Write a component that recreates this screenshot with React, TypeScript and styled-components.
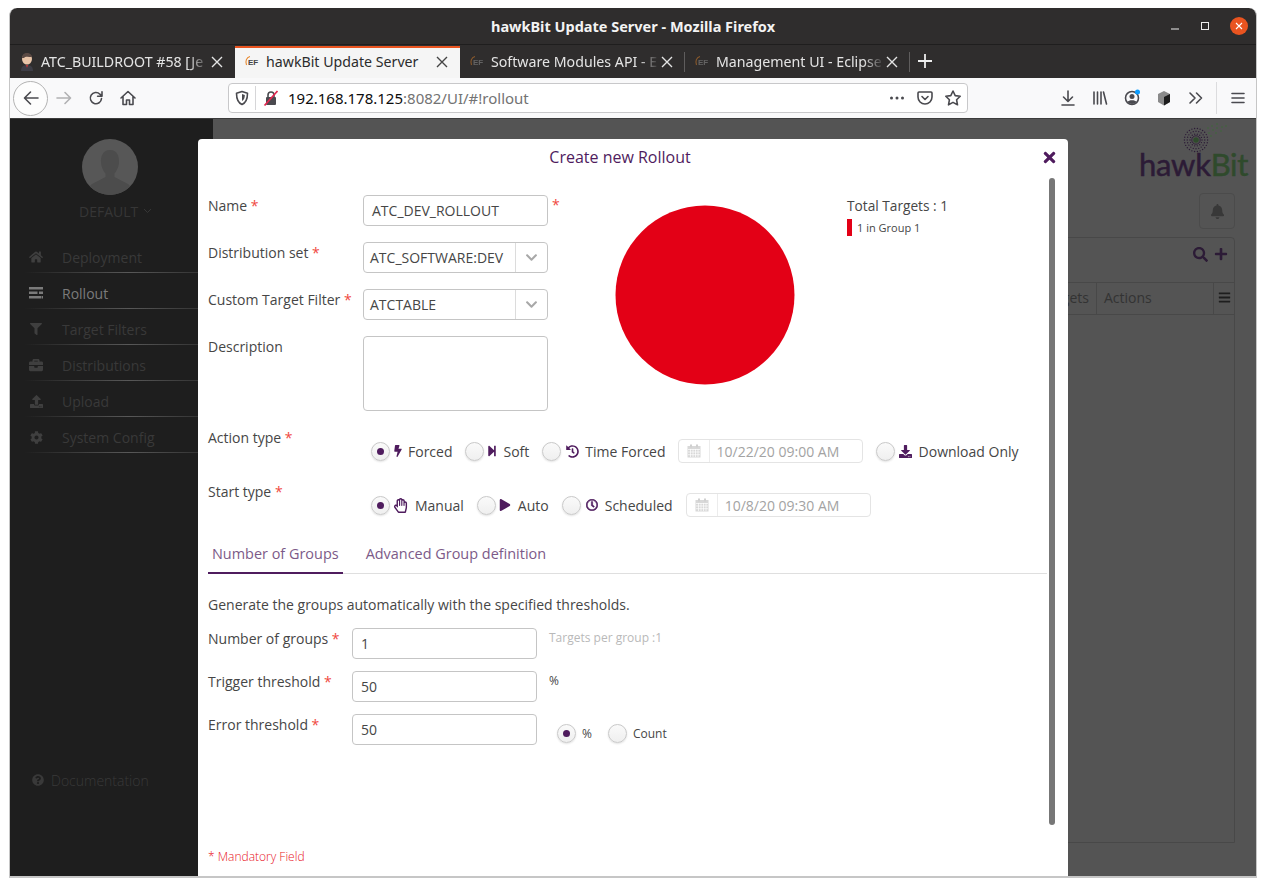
import React from "react";
import styled, { createGlobalStyle } from "styled-components";
import {
  FaBolt, FaStepForward, FaHistory, FaDownload, FaRegHandPaper, FaPlay, FaRegClock,
  FaHome, FaFilter, FaBriefcase, FaUpload, FaCog, FaQuestionCircle, FaTimes, FaSearch,
  FaPlus, FaBars, FaBell, FaChevronDown,
} from "react-icons/fa";

const Global = createGlobalStyle`
  html, body { margin: 0; padding: 0; background: #fff; overflow: hidden; }
  * { box-sizing: border-box; }
`;

const UI = `"Noto Sans", "Open Sans", sans-serif`;
const PAGE = `"Open Sans", "Noto Sans", sans-serif`;
const PURPLE = "#4f1c5e";

const Window = styled.div`
  position: relative;
  width: 1248px;
  height: 870px;
  margin: 8px 0 0 9px;
  display: flex;
  flex-direction: column;
  border: solid #c6c6c6;
  border-width: 0 1px 2px 1px;
  border-radius: 8px 8px 0 0;
  overflow: hidden;
  background: #2f2d2d;
`;
const TitleBar = styled.div`
  height: 37px;
  flex: none;
  position: relative;
  display: flex;
  align-items: center;
  justify-content: center;
  padding: 0 0 1px 0;
  border-bottom: 1px solid #1f1e1e;
  color: #f3f3f3;
  font: 700 14.5px ${UI};
`;
const WinControls = styled.div`
  position: absolute;
  right: 8px;
  top: 9px;
  display: flex;
  align-items: center;
  gap: 20px;
`;
const CloseDot = styled.div`
  width: 18px;
  height: 18px;
  border-radius: 50%;
  background: #e95420;
  display: flex;
  align-items: center;
  justify-content: center;
`;
const TabStrip = styled.div`
  height: 33px;
  flex: none;
  display: flex;
  align-items: stretch;
`;
const Tab = styled.div<{ $active?: boolean; $sep?: boolean }>`
  width: 225px;
  flex: none;
  display: flex;
  align-items: center;
  margin-top: 1px;
  padding: 0 10px 3px 9px;
  background: ${(p) => (p.$active ? "#f5f5f5" : "transparent")};
  color: ${(p) => (p.$active ? "#2c2c2c" : "#e4e4e4")};
  border-top: 2px solid ${(p) => (p.$active ? "#e95420" : "transparent")};
  position: relative;
  font: 400 14.2px ${UI};
  &::after {
    content: "";
    display: ${(p) => (p.$sep ? "block" : "none")};
    position: absolute;
    right: 0;
    top: 4px;
    bottom: 6px;
    width: 1px;
    background: #5f5d5d;
  }
`;
const TabTitle = styled.span`
  flex: 1;
  min-width: 0;
  margin-left: 6px;
  white-space: nowrap;
  overflow: hidden;
  -webkit-mask-image: linear-gradient(to right, #000 88%, transparent 100%);
  mask-image: linear-gradient(to right, #000 88%, transparent 100%);
`;
const PlainTitle = styled(TabTitle)`
  -webkit-mask-image: none;
  mask-image: none;
`;
const Favicon = styled.span<{ $dim?: boolean }>`
  position: relative;
  display: inline-block;
  width: 16px;
  height: 16px;
  flex: none;
  opacity: ${(p) => (p.$dim ? 0.5 : 1)};
`;
const FavText = styled.span<{ $dim?: boolean }>`
  position: absolute;
  left: 4px;
  top: 4px;
  font: 700 8px/10px "Liberation Sans", sans-serif;
  color: ${(p) => (p.$dim ? "#999" : "#444")};
`;
const AddTab = styled.div`
  display: flex;
  align-items: center;
  margin-left: 7px;
  padding-bottom: 2px;
`;
const Toolbar = styled.div`
  height: 41px;
  flex: none;
  background: #f9f9fa;
  border-bottom: 1px solid #3c3c3c;
  display: flex;
  align-items: center;
  padding-left: 3px;
`;
const BackButton = styled.div`
  width: 35px;
  height: 35px;
  border-radius: 50%;
  border: 1px solid #b3b3b3;
  background: #fdfdfd;
  display: flex;
  align-items: center;
  justify-content: center;
  flex: none;
`;
const ToolIcon = styled.div<{ $w?: number }>`
  width: ${(p) => p.$w ?? 32}px;
  height: 28px;
  flex: none;
  display: flex;
  align-items: center;
  justify-content: center;
`;
const UrlBar = styled.div`
  width: 740px;
  height: 30px;
  flex: none;
  background: #fff;
  border: 1px solid #c8c8ca;
  border-radius: 4px;
  display: flex;
  align-items: center;
  margin-left: 84px;
`;
const UrlSep = styled.div`
  width: 1px;
  height: 24px;
  background: #d6d6d8;
  margin: 0 3px 0 0;
  flex: none;
`;
const UrlText = styled.div`
  flex: 1;
  margin-left: 5px;
  font: 400 15px ${UI};
  color: #0c0c0d;
  white-space: nowrap;
`;
const UrlRest = styled.span`
  color: #737373;
`;
const ToolSep = styled.div`
  width: 1px;
  height: 32px;
  background: #dcdcde;
  margin: 0 4px;
  flex: none;
`;
const RightTools = styled.div`
  display: flex;
  align-items: center;
  margin-left: 84px;
`;

const Content = styled.div`
  flex: 1;
  min-height: 0;
  position: relative;
  display: flex;
  background: #545454;
  font-family: ${PAGE};
`;
const Sidebar = styled.div`
  width: 203px;
  flex: none;
  background: #1e1e1e;
  display: flex;
  flex-direction: column;
  padding-top: 20px;
`;
const Avatar = styled.div`
  width: 56px;
  height: 56px;
  border-radius: 50%;
  background: #575757;
  margin-left: 72px;
  overflow: hidden;
  flex: none;
`;
const TenantName = styled.div`
  margin-top: 6px;
  margin-left: 69px;
  height: 20px;
  display: flex;
  align-items: center;
  gap: 5px;
  font-size: 14px;
  color: #363636;
`;
const NavList = styled.div`
  margin-top: 16px;
  margin-left: 15px;
  display: flex;
  flex-direction: column;
`;
const NavItem = styled.div<{ $active?: boolean }>`
  height: 36px;
  padding: 5px 0 0 4px;
  display: flex;
  align-items: center;
  font-size: 14px;
  color: ${(p) => (p.$active ? "#7b7b7b" : "#393939")};
  border-bottom: 1px solid;
  border-image: linear-gradient(to right, transparent, #585858 55%, #2c2c2c 100%) 1;
`;
const NavIcon = styled.span<{ $active?: boolean }>`
  width: 14px;
  margin-right: 19px;
  display: flex;
  justify-content: center;
  color: ${(p) => (p.$active ? "#7b7b7b" : "#3f3f3f")};
`;
const DocLink = styled.div`
  margin-top: auto;
  margin-bottom: 86px;
  margin-left: 22px;
  height: 20px;
  display: flex;
  align-items: center;
  gap: 7px;
  font-size: 14px;
  font-weight: 300;
  color: #393939;
`;
const Main = styled.div`
  flex: 1;
  min-width: 0;
  display: flex;
  flex-direction: column;
  padding: 0 21px 0 20px;
`;
const LogoBlock = styled.div`
  height: 60px;
  margin-right: -13px;
  margin-top: 4px;
  display: flex;
  flex-direction: column;
  align-items: flex-end;
  flex: none;
`;
const LogoMark = styled.div`
  margin-right: 9px;
  height: 26px;
  line-height: 0;
`;
const LogoText = styled.div`
  font: 400 31px/30px Lato, sans-serif;
  color: #2c1b36;
  letter-spacing: -0.3px;
  -webkit-text-stroke: 0.5px currentColor;
`;
const LogoBit = styled.span`
  color: #2f4a2c;
`;
const BellBox = styled.div`
  align-self: flex-end;
  margin-top: 10px;
  width: 36px;
  height: 36px;
  border: 1px solid #4b4b4b;
  border-radius: 4px;
  display: flex;
  align-items: center;
  justify-content: center;
  color: #383838;
  flex: none;
`;
const Panel = styled.div`
  margin-top: 8px;
  height: 606px;
  border: 1px solid #484848;
  border-radius: 4px 4px 0 0;
  display: flex;
  flex-direction: column;
  flex: none;
`;
const PanelHead = styled.div`
  height: 44px;
  flex: none;
  display: flex;
  align-items: flex-start;
  justify-content: flex-end;
  gap: 6px;
  padding: 9px 6px 0 0;
  color: #2c1b36;
`;
const TableHead = styled.div`
  height: 33px;
  flex: none;
  border: solid #484848;
  border-width: 1px 0;
  display: flex;
  justify-content: flex-end;
  align-items: stretch;
  font-size: 14px;
  color: #333;
`;
const HeadCell = styled.div<{ $w: number; $center?: boolean }>`
  width: ${(p) => p.$w}px;
  flex: none;
  border-left: 1px solid #484848;
  display: flex;
  align-items: center;
  justify-content: ${(p) => (p.$center ? "center" : "flex-start")};
  padding: 0 0 2px ${(p) => (p.$center ? 0 : 7)}px;
`;
const HeadText = styled.span`
  margin-left: auto;
  padding-right: 7px;
`;

const Modal = styled.div`
  position: absolute;
  left: 188px;
  top: 20px;
  width: 870px;
  height: 740px;
  background: #fff;
  border-radius: 4px 4px 0 0;
  padding: 0 21px 0 10px;
  color: #464646;
  font-size: 14px;
  overflow: hidden;
`;
const ModalTitle = styled.div`
  height: 36px;
  margin-right: 5px;
  margin-left: -10px;
  display: flex;
  align-items: center;
  justify-content: center;
  font-size: 16px;
  color: ${PURPLE};
`;
const CloseIcon = styled.span`
  position: absolute;
  right: 10px;
  top: 10px;
  color: ${PURPLE};
  line-height: 0;
`;
const Scrollbar = styled.div`
  position: absolute;
  left: 851px;
  top: 39px;
  width: 6px;
  height: 647px;
  border-radius: 3px;
  background: #777;
`;
const TopSection = styled.div`
  margin-top: 20px;
  height: 216px;
  display: flex;
  align-items: flex-start;
`;
const FormGrid = styled.div`
  width: 407px;
  flex: none;
  display: grid;
  grid-template-columns: 155px 185px auto;
  row-gap: 16px;
  align-items: start;
`;
const Label = styled.div`
  font-size: 14px;
  line-height: 20px;
  white-space: nowrap;
  color: #464646;
`;
const FieldLabel = styled(Label)`
  margin-top: 1px;
`;
const Req = styled.span`
  color: #f0483e;
`;
const SideStar = styled.span`
  margin-left: 4px;
  line-height: 20px;
  color: #f0483e;
`;
const TextBox = styled.div<{ $h?: number }>`
  height: ${(p) => p.$h ?? 31}px;
  border: 1px solid #c5c5c5;
  border-radius: 4px;
  padding: 0 8px;
  display: flex;
  align-items: center;
  font-size: 14px;
  color: #464646;
  background: #fff;
`;
const ComboBox = styled(TextBox)`
  padding: 0 0 0 6px;
  justify-content: space-between;
`;
const ComboArrow = styled.span`
  width: 32px;
  height: 100%;
  border-left: 1px solid #dcdcdc;
  display: flex;
  align-items: center;
  justify-content: center;
  color: #a8a8a8;
`;
const Pie = styled.div`
  width: 180px;
  height: 180px;
  margin-top: 10px;
  flex: none;
  line-height: 0;
`;
const Legend = styled.div`
  margin-left: 52px;
  margin-top: 1px;
`;
const LegendTotal = styled.div`
  font-size: 13.7px;
  line-height: 20px;
`;
const LegendRow = styled.div`
  margin-top: 3px;
  display: flex;
  align-items: center;
  gap: 5px;
  font-size: 11px;
  height: 17px;
`;
const LegendSwatch = styled.span`
  width: 5px;
  height: 17px;
  background: #e30016;
`;
const ModeRow = styled.div<{ $mt: number }>`
  margin-top: ${(p) => p.$mt}px;
  display: flex;
  align-items: flex-start;
`;
const ModeLabel = styled(Label)`
  width: 163px;
  flex: none;
`;
const Options = styled.div`
  margin-top: 11px;
  height: 24px;
  display: flex;
  align-items: center;
`;
const Option = styled.div<{ $ml?: number }>`
  display: flex;
  align-items: center;
  margin-left: ${(p) => p.$ml ?? 13}px;
  white-space: nowrap;
  &:first-child { margin-left: 0; }
`;
const Radio = styled.span<{ $on?: boolean }>`
  width: 19px;
  height: 19px;
  flex: none;
  border-radius: 50%;
  background: linear-gradient(#fafafa, #efefef);
  border: 1px solid #c9c9c9;
  box-shadow: 0 1px 2px rgba(0, 0, 0, 0.12);
  display: flex;
  align-items: center;
  justify-content: center;
  &::after {
    content: "";
    width: 7px;
    height: 7px;
    border-radius: 50%;
    background: ${(p) => (p.$on ? PURPLE : "transparent")};
  }
`;
const OptIcon = styled.span<{ $l: number; $w: number; $r: number; $bold?: boolean }>`
  width: ${(p) => p.$w}px;
  margin: 0 ${(p) => p.$r}px 0 ${(p) => p.$l}px;
  color: ${PURPLE};
  display: flex;
  align-items: center;
  justify-content: center;
  flex: none;
  svg {
    flex: none;
    ${(p) => (p.$bold ? "stroke: currentColor; stroke-width: 24;" : "")}
  }
`;
const DateBox = styled.div<{ $ml: number }>`
  margin-left: ${(p) => p.$ml}px;
  width: 185px;
  height: 24px;
  border: 1px solid #e4e4e4;
  border-radius: 4px;
  display: flex;
  align-items: center;
  font-size: 14px;
  color: #a3a3a3;
  flex: none;
`;
const DateIcon = styled.span`
  width: 31px;
  height: 100%;
  border-right: 1px solid #ececec;
  display: flex;
  align-items: center;
  justify-content: center;
  margin-right: 7px;
  flex: none;
`;
const GroupTabs = styled.div`
  margin-top: 28px;
  height: 29px;
  border-bottom: 1px solid #dfdfdf;
  display: flex;
`;
const GroupTab = styled.div<{ $active?: boolean; $ml?: number }>`
  height: 29px;
  padding: 0 4px;
  margin-left: ${(p) => p.$ml ?? 0}px;
  font-size: 14.45px;
  line-height: 18px;
  color: #7c5a88;
  border-bottom: 2px solid ${(p) => (p.$active ? PURPLE : "transparent")};
`;
const Intro = styled.div`
  margin-top: 21px;
  line-height: 20px;
  font-size: 14px;
`;
const ThresholdGrid = styled.div`
  margin-top: 13px;
  display: grid;
  grid-template-columns: 144px 185px auto;
  row-gap: 12px;
  align-items: start;
`;
const Hint = styled.div<{ $dark?: boolean }>`
  margin-left: 12px;
  font-size: 12px;
  line-height: 20px;
  color: ${(p) => (p.$dark ? "#464646" : "#b9b9b9")};
`;
const UnitRadios = styled.div`
  margin: 9px 0 0 20px;
  height: 20px;
  display: flex;
  align-items: center;
  font-size: 12px;
`;
const UnitText = styled.span`
  margin-left: 6px;
`;
const Mandatory = styled.div`
  margin-top: 102px;
  font-size: 12px;
  line-height: 20px;
  font-weight: 300;
  color: #e8141c;
`;

const Stroke = { fill: "none", stroke: "#4a4a4f", strokeWidth: 1.6, strokeLinecap: "round", strokeLinejoin: "round" } as const;

const EfIcon = ({ dim }: { dim?: boolean }) => (
  <Favicon $dim={dim}>
    <svg width="16" height="16" viewBox="0 0 16 16">
      <path d="M6 2.5C2.5 3.5 1 7 2.5 11" fill="none" stroke="#e8862a" strokeWidth="1.1" />
    </svg>
    <FavText $dim={dim}>EF</FavText>
  </Favicon>
);
const TabClose = ({ color }: { color: string }) => (
  <svg width="16" height="18" viewBox="1 0 16 18">
    <path d="M4 4l10 10M14 4L4 14" stroke={color} strokeWidth="1.4" fill="none" />
  </svg>
);
const CalendarIcon = () => (
  <svg width="14" height="14" viewBox="0 0 14 14">
    <rect x="0.5" y="2" width="13" height="11.5" fill="#d8d8d8" />
    <rect x="3" y="0.5" width="2" height="3" fill="#d0d0d0" />
    <rect x="9" y="0.5" width="2" height="3" fill="#d0d0d0" />
    <path d="M1 5.5h12M1 8h12M1 10.7h12M3.5 5v8M6 5v8M8.5 5v8M11 5v8" stroke="#fff" strokeWidth="0.7" />
  </svg>
);
const RolloutIcon = () => (
  <svg width="14" height="12" viewBox="0 0 14 12">
    <path d="M0 0h14v2.5H0zM0 4.5h8.5V7H0zM10 4.5h4V7h-4zM0 9h12v2.5H0zM12.5 9H14v2.5h-1.5z" fill="currentColor" />
  </svg>
);
const Jenkins = () => (
  <svg width="16" height="18" viewBox="0 0 16 18" style={{ flex: "none" }}>
    <ellipse cx="8" cy="6" rx="5" ry="5.5" fill="#e8c4a8" />
    <path d="M3 5c0-4 3-5 5-5s5 1.5 5 4c-3 0-7-1-8 1z" fill="#5b4a44" />
    <path d="M2 18c0-4 2-6 6-6s6 2 6 6z" fill="#3d3d46" />
    <path d="M7 12l1 3 1-3z" fill="#c33" />
  </svg>
);
const LogoDots = () => {
  const dots: React.ReactNode[] = [];
  for (let r = 0; r < 3; r++) {
    const n = 14 + r * 6;
    for (let i = 0; i < n; i++) {
      const a = (i / n) * Math.PI * 2;
      const rad = 6 + r * 2.8;
      dots.push(
        <circle key={`${r}-${i}`} cx={21 + rad * Math.cos(a)} cy={21 + rad * Math.sin(a)} r={0.7} fill="#2c1b36" />
      );
    }
  }
  return (
    <svg width="62" height="27" viewBox="2 4 62 27" style={{ overflow: "visible" }}>
      {dots}
      <circle cx="21" cy="21" r="2.8" fill="#2f4a2c" />
      <circle cx="21" cy="21" r="4.2" fill="none" stroke="#2c1b36" strokeWidth="0.9" />
      {[[34, 14], [38, 11], [42, 9], [47, 8], [51, 7], [36, 17], [41, 14], [46, 12], [33, 9], [37, 7], [42, 5]].map(([x, y]) => (
        <circle key={`${x}-${y}`} cx={x} cy={y} r="0.8" fill="#3c6a38" />
      ))}
    </svg>
  );
};

export default function App() {
  return (
    <>
      <Global />
      <Window>
        <TitleBar>
          hawkBit Update Server - Mozilla Firefox
          <WinControls>
            <svg width="10" height="10" viewBox="0 0 10 10"><path d="M1 8h8" stroke="#eee" strokeWidth="1.2" /></svg>
            <svg width="10" height="10" viewBox="0 0 10 10"><rect x="1.5" y="1.5" width="7" height="7" fill="none" stroke="#eee" strokeWidth="1" /></svg>
            <CloseDot>
              <svg width="10" height="10" viewBox="0 0 10 10"><path d="M2 2l6 6M8 2l-6 6" stroke="#fff" strokeWidth="1.1" /></svg>
            </CloseDot>
          </WinControls>
        </TitleBar>
        <TabStrip>
          <Tab>
            <Jenkins />
            <TabTitle>ATC_BUILDROOT #58 [Je</TabTitle>
            <TabClose color="#e4e4e4" />
          </Tab>
          <Tab $active>
            <EfIcon />
            <PlainTitle>hawkBit Update Server</PlainTitle>
            <TabClose color="#444" />
          </Tab>
          <Tab $sep>
            <EfIcon dim />
            <TabTitle>Software Modules API - E</TabTitle>
            <TabClose color="#e4e4e4" />
          </Tab>
          <Tab $sep>
            <EfIcon dim />
            <TabTitle>Management UI - Eclipse</TabTitle>
            <TabClose color="#e4e4e4" />
          </Tab>
          <AddTab>
            <svg width="16" height="16" viewBox="0 0 16 16"><path d="M8 1v14M1 8h14" stroke="#eee" strokeWidth="1.8" /></svg>
          </AddTab>
        </TabStrip>
        <Toolbar>
          <BackButton>
            <svg width="18" height="18" viewBox="0 0 18 18"><path d="M16 9H3M8.5 3L2.5 9l6 6" {...Stroke} /></svg>
          </BackButton>
          <ToolIcon>
            <svg width="18" height="18" viewBox="0 0 18 18"><path d="M2 9h13M10 3.5L15.5 9 10 14.5" {...Stroke} stroke="#b1b1b3" /></svg>
          </ToolIcon>
          <ToolIcon>
            <svg width="18" height="18" viewBox="0 0 18 18"><path d="M14.5 9.5a5.6 5.6 0 1 1-1.6-4.3L15 7.2M15 2.8v4.4h-4.4" {...Stroke} /></svg>
          </ToolIcon>
          <ToolIcon>
            <svg width="18" height="18" viewBox="0 0 18 18"><path d="M2 9l7-6.5L16 9M4 7.5V15.5h3.5V11h3v4.5H14V7.5" {...Stroke} /></svg>
          </ToolIcon>
          <UrlBar>
            <ToolIcon $w={26}>
              <svg width="16" height="16" viewBox="0 0 16 16"><path d="M8 1.5l5.5 1.7c0 6-1.5 9.5-5.5 11.3C4 12.7 2.5 9.2 2.5 3.2z" {...Stroke} /><path d="M8 4l2.8 1c0 3-.8 4.8-2.8 6z" fill="#4a4a4f" /></svg>
            </ToolIcon>
            <UrlSep />
            <ToolIcon $w={24}>
              <svg width="18" height="18" viewBox="0 0 18 18"><rect x="4" y="8" width="10" height="8" rx="1" fill="#4a4a4f" /><path d="M6 8V6a3 3 0 0 1 6 0v2" {...Stroke} /><path d="M2.5 16.5L15.5 2" stroke="#e22850" strokeWidth="1.8" fill="none" /></svg>
            </ToolIcon>
            <UrlText>192.168.178.125<UrlRest>:8082/UI/#!rollout</UrlRest></UrlText>
            <ToolIcon $w={28}>
              <svg width="18" height="18" viewBox="0 0 18 18"><circle cx="3.5" cy="9" r="1.5" fill="#4a4a4f" /><circle cx="9" cy="9" r="1.5" fill="#4a4a4f" /><circle cx="14.5" cy="9" r="1.5" fill="#4a4a4f" /></svg>
            </ToolIcon>
            <ToolIcon $w={28}>
              <svg width="18" height="18" viewBox="0 0 18 18"><path d="M3 3h12a1 1 0 0 1 1 1v4a7 7 0 0 1-14 0V4a1 1 0 0 1 1-1z" {...Stroke} /><path d="M6 7.5l3 3 3-3" {...Stroke} /></svg>
            </ToolIcon>
            <ToolIcon $w={28}>
              <svg width="18" height="18" viewBox="0 0 18 18"><path d="M9 2l2.2 4.6 5 .7-3.6 3.5.9 5L9 13.4l-4.500 2.400.9-5L1.800 7.300l5-.7z" {...Stroke} /></svg>
            </ToolIcon>
          </UrlBar>
          <RightTools>
            <ToolIcon>
              <svg width="18" height="18" viewBox="0 0 18 18"><path d="M9 2v10M4.5 8L9 12.5 13.5 8M3 16h12" {...Stroke} /></svg>
            </ToolIcon>
            <ToolIcon>
              <svg width="18" height="18" viewBox="0 0 18 18"><path d="M3 3v12M6.500 3v12M10 3v12M12.500 3l3 12" {...Stroke} /></svg>
            </ToolIcon>
            <ToolIcon>
              <svg width="18" height="18" viewBox="0 0 18 18"><circle cx="9" cy="9" r="6.500" {...Stroke} /><circle cx="9" cy="7.500" r="2.500" fill="#4a4a4f" /><path d="M4.500 13c1-2.500 8-2.500 9 0a6 6 0 0 1-9 0z" fill="#4a4a4f" /><circle cx="14.500" cy="3" r="2.500" fill="#0a9dff" /></svg>
            </ToolIcon>
            <ToolIcon>
              <svg width="18" height="18" viewBox="0 0 18 18"><path d="M9 2l6 3v8l-6 3.500L3 13V5z" fill="#8a8a8a" /><path d="M9 8l6-3v8l-6 3.500z" fill="#1c1c1c" /></svg>
            </ToolIcon>
            <ToolIcon>
              <svg width="18" height="18" viewBox="0 0 18 18"><path d="M3 4l5 5-5 5M9.500 4l5 5-5 5" {...Stroke} /></svg>
            </ToolIcon>
            <ToolSep />
            <ToolIcon $w={34}>
              <svg width="18" height="18" viewBox="0 0 18 18"><path d="M3 4.500h12M3 9h12M3 13.500h12" {...Stroke} /></svg>
            </ToolIcon>
          </RightTools>
        </Toolbar>
        <Content>
          <Sidebar>
            <Avatar>
              <svg width="56" height="56" viewBox="0 0 56 56">
                <path d="M28 11c7 0 9.500 6 9 13-.5 5-3 9-4.500 10.500v3.500L46 45c2 1.500 3 4 3 11H7c0-7 1-9.500 3-11l13.500-7v-3.500C22 33 19.500 29 19 24c-.5-7 2-13 9-13z" fill="#4c4c4c" />
              </svg>
            </Avatar>
            <TenantName>
              DEFAULT
              <svg width="9" height="6" viewBox="0 0 9 6"><path d="M1 1l3.500 3.500L8 1" fill="none" stroke="#363636" /></svg>
            </TenantName>
            <NavList>
              <NavItem><NavIcon><FaHome size={14} /></NavIcon>Deployment</NavItem>
              <NavItem $active><NavIcon $active><RolloutIcon /></NavIcon>Rollout</NavItem>
              <NavItem><NavIcon><FaFilter size={12} /></NavIcon>Target Filters</NavItem>
              <NavItem><NavIcon><FaBriefcase size={14} /></NavIcon>Distributions</NavItem>
              <NavItem><NavIcon><FaUpload size={13} /></NavIcon>Upload</NavItem>
              <NavItem><NavIcon><FaCog size={13} /></NavIcon>System Config</NavItem>
            </NavList>
            <DocLink><FaQuestionCircle size={12} />Documentation</DocLink>
          </Sidebar>
          <Main>
            <LogoBlock>
              <LogoMark><LogoDots /></LogoMark>
              <LogoText>hawk<LogoBit>Bit</LogoBit></LogoText>
            </LogoBlock>
            <BellBox><FaBell size={15} /></BellBox>
            <Panel>
              <PanelHead><FaSearch size={15} /><FaPlus size={14} /></PanelHead>
              <TableHead>
                <HeadCell $w={400}><HeadText>Total Targets</HeadText></HeadCell>
                <HeadCell $w={117}>Actions</HeadCell>
                <HeadCell $w={21} $center><FaBars size={13} color="#1e1e1e" /></HeadCell>
              </TableHead>
            </Panel>
          </Main>
          <Modal>
            <ModalTitle>Create new Rollout</ModalTitle>
            <CloseIcon><FaTimes size={17} /></CloseIcon>
            <Scrollbar />
            <TopSection>
              <FormGrid>
                <FieldLabel>Name <Req>*</Req></FieldLabel>
                <TextBox>ATC_DEV_ROLLOUT</TextBox>
                <SideStar>*</SideStar>
                <FieldLabel>Distribution set <Req>*</Req></FieldLabel>
                <ComboBox>ATC_SOFTWARE:DEV<ComboArrow><FaChevronDown size={13} /></ComboArrow></ComboBox>
                <span />
                <FieldLabel>Custom Target Filter <Req>*</Req></FieldLabel>
                <ComboBox>ATCTABLE<ComboArrow><FaChevronDown size={13} /></ComboArrow></ComboBox>
                <span />
                <FieldLabel>Description</FieldLabel>
                <TextBox $h={75} />
                <span />
              </FormGrid>
              <Pie>
                <svg width="180" height="180" viewBox="0 0 180 180"><circle cx="90" cy="90" r="89.5" fill="#e30016" /></svg>
              </Pie>
              <Legend>
                <LegendTotal>Total Targets : 1</LegendTotal>
                <LegendRow><LegendSwatch />1 in Group 1</LegendRow>
              </Legend>
            </TopSection>
            <ModeRow $mt={17}>
              <ModeLabel>Action type <Req>*</Req></ModeLabel>
              <Options>
                <Option><Radio $on /><OptIcon $l={4} $w={7} $r={7}><FaBolt size={12} /></OptIcon>Forced</Option>
                <Option $ml={12}><Radio /><OptIcon $l={4} $w={9} $r={7}><FaStepForward size={12} /></OptIcon>Soft</Option>
                <Option><Radio /><OptIcon $l={5} $w={12} $r={7}><FaHistory size={13} /></OptIcon>Time Forced</Option>
                <DateBox $ml={12}><DateIcon><CalendarIcon /></DateIcon>10/22/20 09:00 AM</DateBox>
                <Option><Radio /><OptIcon $l={4} $w={13} $r={7}><FaDownload size={13} /></OptIcon>Download Only</Option>
              </Options>
            </ModeRow>
            <ModeRow $mt={19}>
              <ModeLabel>Start type <Req>*</Req></ModeLabel>
              <Options>
                <Option><Radio $on /><OptIcon $l={4} $w={13} $r={8}><FaRegHandPaper size={15} /></OptIcon>Manual</Option>
                <Option><Radio /><OptIcon $l={4} $w={11} $r={7}><FaPlay size={12} /></OptIcon>Auto</Option>
                <Option><Radio /><OptIcon $l={5} $w={12} $r={7} $bold><FaRegClock size={12} /></OptIcon>Scheduled</Option>
                <DateBox $ml={13}><DateIcon><CalendarIcon /></DateIcon>10/8/20 09:30 AM</DateBox>
              </Options>
            </ModeRow>
            <GroupTabs>
              <GroupTab $active>Number of Groups</GroupTab>
              <GroupTab $ml={19}>Advanced Group definition</GroupTab>
            </GroupTabs>
            <Intro>Generate the groups automatically with the specified thresholds.</Intro>
            <ThresholdGrid>
              <FieldLabel>Number of groups <Req>*</Req></FieldLabel>
              <TextBox>1</TextBox>
              <Hint>Targets per group :1</Hint>
              <FieldLabel>Trigger threshold <Req>*</Req></FieldLabel>
              <TextBox>50</TextBox>
              <Hint $dark>%</Hint>
              <FieldLabel>Error threshold <Req>*</Req></FieldLabel>
              <TextBox>50</TextBox>
              <UnitRadios>
                <Radio $on /><UnitText>%</UnitText>
                <Option $ml={16}><Radio /><UnitText>Count</UnitText></Option>
              </UnitRadios>
            </ThresholdGrid>
            <Mandatory>* Mandatory Field</Mandatory>
          </Modal>
        </Content>
      </Window>
    </>
  );
}
